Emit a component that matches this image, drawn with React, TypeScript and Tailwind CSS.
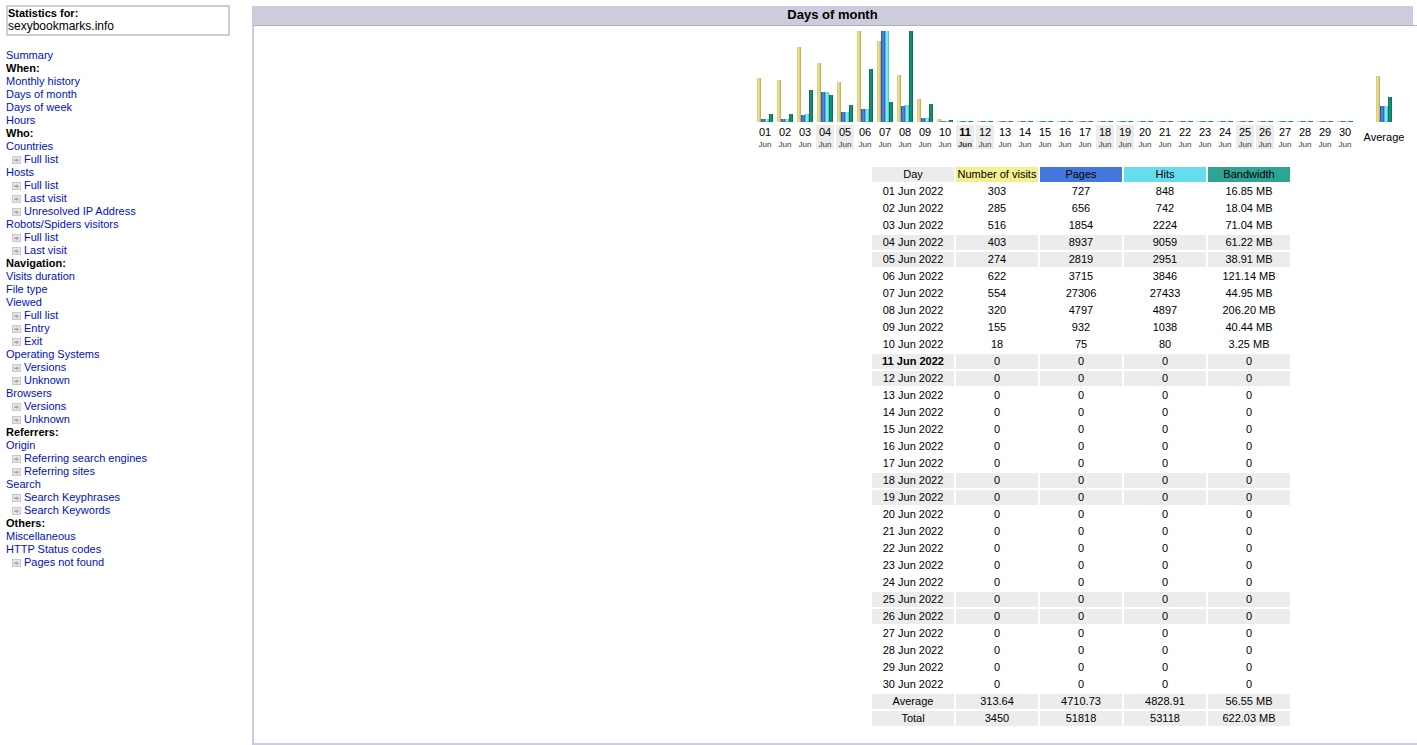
const menu: [string, "link" | "head" | "sub"][] = [
  ["Summary", "link"],
  ["When:", "head"],
  ["Monthly history", "link"],
  ["Days of month", "link"],
  ["Days of week", "link"],
  ["Hours", "link"],
  ["Who:", "head"],
  ["Countries", "link"],
  ["Full list", "sub"],
  ["Hosts", "link"],
  ["Full list", "sub"],
  ["Last visit", "sub"],
  ["Unresolved IP Address", "sub"],
  ["Robots/Spiders visitors", "link"],
  ["Full list", "sub"],
  ["Last visit", "sub"],
  ["Navigation:", "head"],
  ["Visits duration", "link"],
  ["File type", "link"],
  ["Viewed", "link"],
  ["Full list", "sub"],
  ["Entry", "sub"],
  ["Exit", "sub"],
  ["Operating Systems", "link"],
  ["Versions", "sub"],
  ["Unknown", "sub"],
  ["Browsers", "link"],
  ["Versions", "sub"],
  ["Unknown", "sub"],
  ["Referrers:", "head"],
  ["Origin", "link"],
  ["Referring search engines", "sub"],
  ["Referring sites", "sub"],
  ["Search", "link"],
  ["Search Keyphrases", "sub"],
  ["Search Keywords", "sub"],
  ["Others:", "head"],
  ["Miscellaneous", "link"],
  ["HTTP Status codes", "link"],
  ["Pages not found", "sub"],
];

// visits, pages, hits, bandwidth in MB, bandwidth label
const filled: [number, number, number, number, string][] = [
  [303, 727, 848, 16.85, "16.85 MB"],
  [285, 656, 742, 18.04, "18.04 MB"],
  [516, 1854, 2224, 71.04, "71.04 MB"],
  [403, 8937, 9059, 61.22, "61.22 MB"],
  [274, 2819, 2951, 38.91, "38.91 MB"],
  [622, 3715, 3846, 121.14, "121.14 MB"],
  [554, 27306, 27433, 44.95, "44.95 MB"],
  [320, 4797, 4897, 206.2, "206.20 MB"],
  [155, 932, 1038, 40.44, "40.44 MB"],
  [18, 75, 80, 3.25, "3.25 MB"],
];

const days = Array.from({ length: 30 }, (_, i) => {
  const row = filled[i] || [0, 0, 0, 0, "0"];
  const num = String(i + 1).padStart(2, "0");
  return { num, visits: row[0], pages: row[1], hits: row[2], bw: row[3], bwLabel: row[4] };
});

const shaded = ["04", "05", "11", "12", "18", "19", "25", "26"];

const barHeight = (v: number, max: number) => Math.floor((v / max) * 90) + 1;

function Bars({ visits, pages, hits, bw }: { visits: number; pages: number; hits: number; bw: number }) {
  return (
    <div className="flex h-[91px] items-end justify-center">
      <div className="w-[4px] bg-[linear-gradient(to_right,#d2c46e,#efe596_45%,#b3a24e)]" style={{ height: barHeight(visits, 622) }} />
      <div className="w-[4px] bg-[linear-gradient(to_right,#23459f,#5c8ce6_50%,#2f58bc)]" style={{ height: barHeight(pages, 27306) }} />
      <div className="w-[4px] bg-[linear-gradient(to_right,#20b8cc,#a6f2f8_50%,#2cc0d4)]" style={{ height: barHeight(hits, 27433) }} />
      <div className="w-[4px] bg-[linear-gradient(to_right,#056a50,#1f9a7c_50%,#05664e)]" style={{ height: barHeight(bw, 206.2) }} />
    </div>
  );
}

function SubIcon() {
  return (
    <svg width="9" height="8" viewBox="0 0 9 8" className="shrink-0">
      <rect x="0" y="0" width="9" height="8" fill="#e6e6e6" />
      <rect x="0.5" y="0.5" width="8" height="7" fill="none" stroke="#c8c8c8" />
      <path d="M2 3.5h2.5V2L7 4.25 4.5 6.5V5H2z" fill="#a8a8a8" />
    </svg>
  );
}

function Cell({ children, className = "" }: { children: React.ReactNode; className?: string }) {
  return <div className={`h-[15px] text-center leading-[15px] ${className}`}>{children}</div>;
}

export default function App() {
  return (
    <div className="flex h-[745px] w-[1417px] overflow-hidden bg-white font-['Liberation_Sans',Arial,sans-serif] text-[11px] text-black">
      <aside className="w-[252px] shrink-0">
        <div className="ml-[6px] mt-[5px] h-[31px] w-[224px] border-2 border-[#ccccdd]">
          <div className="text-[11px] font-bold leading-[12px]">Statistics for:</div>
          <div className="text-[12px] leading-[15px]">sexybookmarks.info</div>
        </div>
        <nav className="ml-[6px] mt-[13px] leading-[13px]">
          {menu.map(([label, kind], i) => {
            if (kind === "head") return <div key={i} className="h-[13px] font-bold">{label}</div>;
            if (kind === "sub")
              return (
                <div key={i} className="flex h-[13px] items-center pl-[6px] text-[#0011bb]">
                  <SubIcon />
                  <span className="ml-[3px]">{label}</span>
                </div>
              );
            return <div key={i} className="h-[13px] text-[#0011bb]">{label}</div>;
          })}
        </nav>
      </aside>

      <main className="w-[1658px] shrink-0">
        <div className="mt-[6px] h-[19px] w-[1161px] bg-[#ccccdd] text-center text-[13px] font-bold leading-[17px]">
          Days of month
        </div>
        <div className="flex h-[720px] flex-col items-center border-2 border-t border-[#ccccdd] border-t-[#b0b0bc] pt-[5px]">
          <div className="flex w-[652px]">
            {days.map((d) => (
              <div key={d.num} className="w-[20px]">
                <Bars visits={d.visits} pages={d.pages} hits={d.hits} bw={d.bw} />
                <div className={`mx-auto mt-[3px] h-[24px] w-[18px] pt-[1px] text-center ${shaded.includes(d.num) ? "bg-[#ececec]" : ""} ${d.num === "11" ? "font-bold" : ""}`}>
                  <div className="text-[11px] leading-[12px]">{d.num}</div>
                  <div className="mt-[2px] text-[8px] leading-[10px] text-[#333333]">Jun</div>
                </div>
              </div>
            ))}
            <div className="ml-[6px] w-[46px]">
              <Bars visits={313.64} pages={4710.73} hits={4828.91} bw={56.55} />
              <div className="mt-[3px] h-[24px] text-center leading-[24px]">Average</div>
            </div>
          </div>

          <div className="mt-[18px] grid grid-cols-[repeat(5,82px)] gap-[2px]">
            <Cell className="bg-[#ececec]">Day</Cell>
            <Cell className="bg-[#f4f090]">Number of visits</Cell>
            <Cell className="bg-[#4477dd]">Pages</Cell>
            <Cell className="bg-[#66ddee]">Hits</Cell>
            <Cell className="bg-[#2ea495]">Bandwidth</Cell>
            {days.map((d) => {
              const bg = shaded.includes(d.num) ? "bg-[#ececec]" : "";
              return [
                <Cell key={d.num + "d"} className={`${bg} ${d.num === "11" ? "font-bold" : ""}`}>{d.num} Jun 2022</Cell>,
                <Cell key={d.num + "v"} className={bg}>{d.visits}</Cell>,
                <Cell key={d.num + "p"} className={bg}>{d.pages}</Cell>,
                <Cell key={d.num + "h"} className={bg}>{d.hits}</Cell>,
                <Cell key={d.num + "b"} className={bg}>{d.bwLabel}</Cell>,
              ];
            })}
            {["Average", "313.64", "4710.73", "4828.91", "56.55 MB", "Total", "3450", "51818", "53118", "622.03 MB"].map((t, i) => (
              <Cell key={i} className="bg-[#ececec]">{t}</Cell>
            ))}
          </div>
        </div>
      </main>
    </div>
  );
}
